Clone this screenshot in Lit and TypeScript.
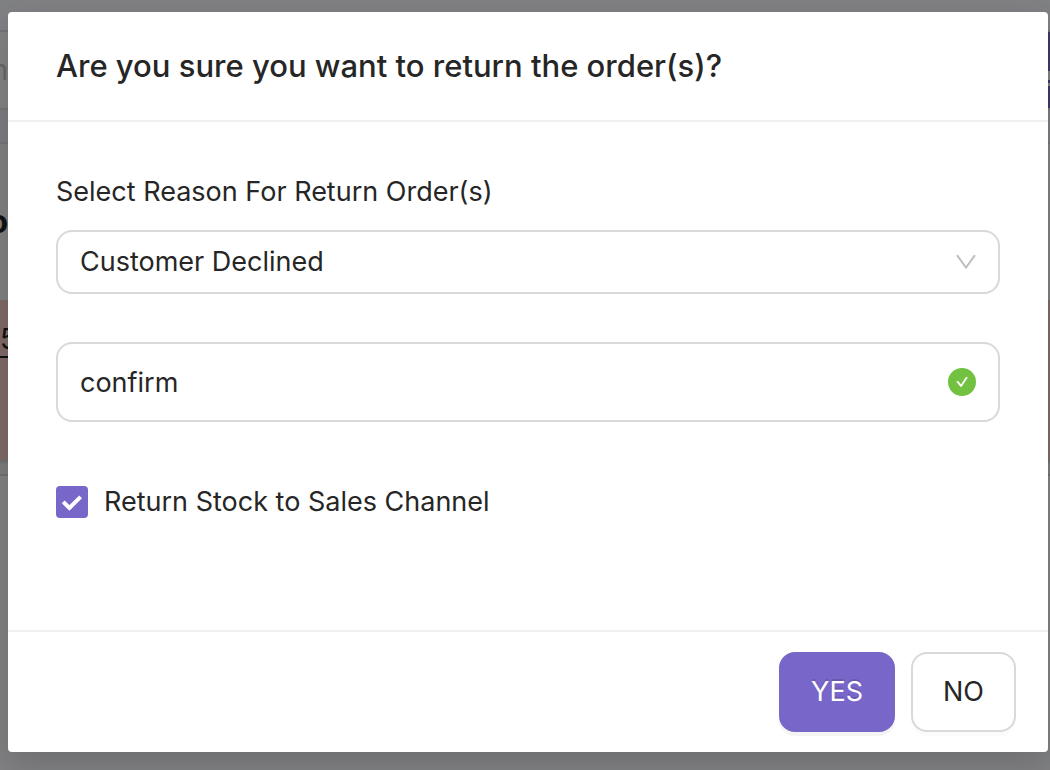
import { LitElement, html, css } from "lit";
import { customElement, state } from "lit/decorators.js";

@customElement("page-backdrop")
class PageBackdrop extends LitElement {
  static styles = css`
    :host {
      display: block;
      overflow: hidden;
      background: #808183;
      color: #111;
      font: 28px/44px Inter, "Liberation Sans", sans-serif;
    }
    .top {
      height: 30px;
      background: #808184;
    }
    .toolbar {
      display: flex;
      justify-content: space-between;
      align-items: center;
      height: 76px;
      border-top: 2px solid #737476;
      border-bottom: 2px solid #737476;
      background: #828282;
      color: #666;
    }
    .action {
      width: 10px;
      height: 76px;
      background: linear-gradient(
        #40376c 39px,
        #828282 39px 48px,
        #40376c 48px 51px,
        #828282 51px 54px,
        #40376c 54px
      );
    }
    .band {
      height: 32px;
      border-bottom: 2px solid #747577;
      background: #7b7d80;
    }
    .heading {
      display: flex;
      align-items: center;
      height: 156px;
      background: #808080;
    }
    .edge {
      display: flex;
      justify-content: flex-end;
      width: 8px;
    }
    .heading .edge {
      font-size: 32px;
      font-weight: 700;
    }
    .row {
      height: 160px;
      padding-top: 22px;
      box-sizing: border-box;
      background: #806868;
    }
    .code {
      display: block;
      width: fit-content;
      line-height: 34px;
      border-bottom: 2px solid #111;
    }
    .rule {
      height: 14px;
      border-bottom: 2px solid #6e6f70;
      background: linear-gradient(#6b6c6d, #7c7c7c 5px);
    }
  `;

  render() {
    return html`
      <div class="top"></div>
      <div class="toolbar"><span class="edge">m</span><span class="action"></span></div>
      <div class="band"></div>
      <div class="heading"><span class="edge">o</span></div>
      <div class="row"><span class="code">5</span></div>
      <div class="rule"></div>
    `;
  }
}

@customElement("app-root")
class AppRoot extends LitElement {
  static styles = css`
    :host {
      display: grid;
      min-height: 100vh;
      color: #262626;
      font: 27px/44px Inter, "Liberation Sans", sans-serif;
    }
    page-backdrop,
    .dialog {
      grid-area: 1 / 1;
      min-width: 0;
    }
    .dialog {
      z-index: 1;
      display: flex;
      flex-direction: column;
      margin: 12px 2px 18px 8px;
      border-radius: 4px;
      background: #fff;
      box-shadow: 0 12px 32px rgba(0, 0, 0, 0.15);
    }
    header {
      padding: 32px 48px;
      border-bottom: 2px solid #f0f0f0;
    }
    h1 {
      margin: 0;
      font-size: 31px;
      font-weight: 500;
      line-height: 44px;
    }
    .body {
      flex: 1;
      padding: 48px;
    }
    .label {
      display: block;
      margin-bottom: 16px;
    }
    .field {
      display: grid;
      align-items: center;
    }
    .field > * {
      grid-area: 1 / 1;
    }
    .field svg {
      justify-self: end;
      margin-right: 24px;
      pointer-events: none;
    }
    .reason {
      margin-bottom: 48px;
    }
    .confirm {
      margin-bottom: 58px;
    }
    select,
    .text {
      appearance: none;
      box-sizing: border-box;
      width: 100%;
      height: 64px;
      margin: 0;
      padding: 0 72px 0 22px;
      border: 2px solid #d9d9d9;
      border-radius: 16px;
      outline: none;
      background: #fff;
      color: inherit;
      font: inherit;
    }
    .text {
      height: 80px;
    }
    .check {
      display: flex;
      align-items: center;
      gap: 16px;
    }
    .tick {
      display: grid;
    }
    .tick > * {
      grid-area: 1 / 1;
    }
    .tick input {
      appearance: none;
      width: 32px;
      height: 32px;
      margin: 0;
      border: 2px solid #d9d9d9;
      border-radius: 4px;
      box-sizing: border-box;
    }
    .tick input:checked {
      border-color: #7866c8;
      background: #7866c8;
    }
    .tick svg {
      pointer-events: none;
    }
    footer {
      display: flex;
      justify-content: flex-end;
      gap: 16px;
      padding: 20px 32px;
      border-top: 2px solid #f0f0f0;
    }
    button {
      height: 80px;
      padding: 0 30px;
      border: 2px solid #d9d9d9;
      border-radius: 16px;
      background: #fff;
      color: inherit;
      font: inherit;
      box-shadow: 0 4px 0 rgba(0, 0, 0, 0.016);
    }
    .primary {
      border-color: #7866c8;
      background: #7866c8;
      color: #fff;
      text-shadow: 0 -2px 0 rgba(0, 0, 0, 0.12);
      box-shadow: 0 4px 0 rgba(0, 0, 0, 0.045);
    }
  `;

  @state() private returnStock = true;

  private onToggle(e: Event) {
    this.returnStock = (e.target as HTMLInputElement).checked;
  }

  render() {
    return html`
      <page-backdrop aria-hidden="true"></page-backdrop>
      <section class="dialog" role="dialog" aria-modal="true" aria-labelledby="title">
        <header><h1 id="title">Are you sure you want to return the order(s)?</h1></header>
        <div class="body">
          <label class="label" for="reason">Select Reason For Return Order(s)</label>
          <div class="field reason">
            <select id="reason">
              <option selected>Customer Declined</option>
            </select>
            <svg width="20" height="16" viewBox="0 0 20 16" fill="none" stroke="#bfbfbf" stroke-width="2">
              <path d="M1 1.2 L10 13.6 L19 1.2" />
            </svg>
          </div>
          <div class="field confirm">
            <input class="text" type="text" aria-label="Confirmation" .value=${"confirm"} />
            <svg width="28" height="28" viewBox="0 0 28 28">
              <circle cx="14" cy="14" r="14" fill="#72c140" />
              <path d="M8 13.2h2.4l2.7 3.4 4.5-7.4h2.4l-6.2 9.4c-.4.6-1.2.6-1.6 0z" fill="#fff" />
            </svg>
          </div>
          <label class="check">
            <span class="tick">
              <input type="checkbox" .checked=${this.returnStock} @change=${this.onToggle} />
              ${this.returnStock
                ? html`<svg width="32" height="32" viewBox="0 0 32 32" fill="none" stroke="#fff" stroke-width="4">
                    <path d="M7.2 15.8 L13.4 22 L24.6 10.8" />
                  </svg>`
                : ""}
            </span>
            <span>Return Stock to Sales Channel</span>
          </label>
        </div>
        <footer>
          <button class="primary" type="button">YES</button>
          <button type="button">NO</button>
        </footer>
      </section>
    `;
  }
}
